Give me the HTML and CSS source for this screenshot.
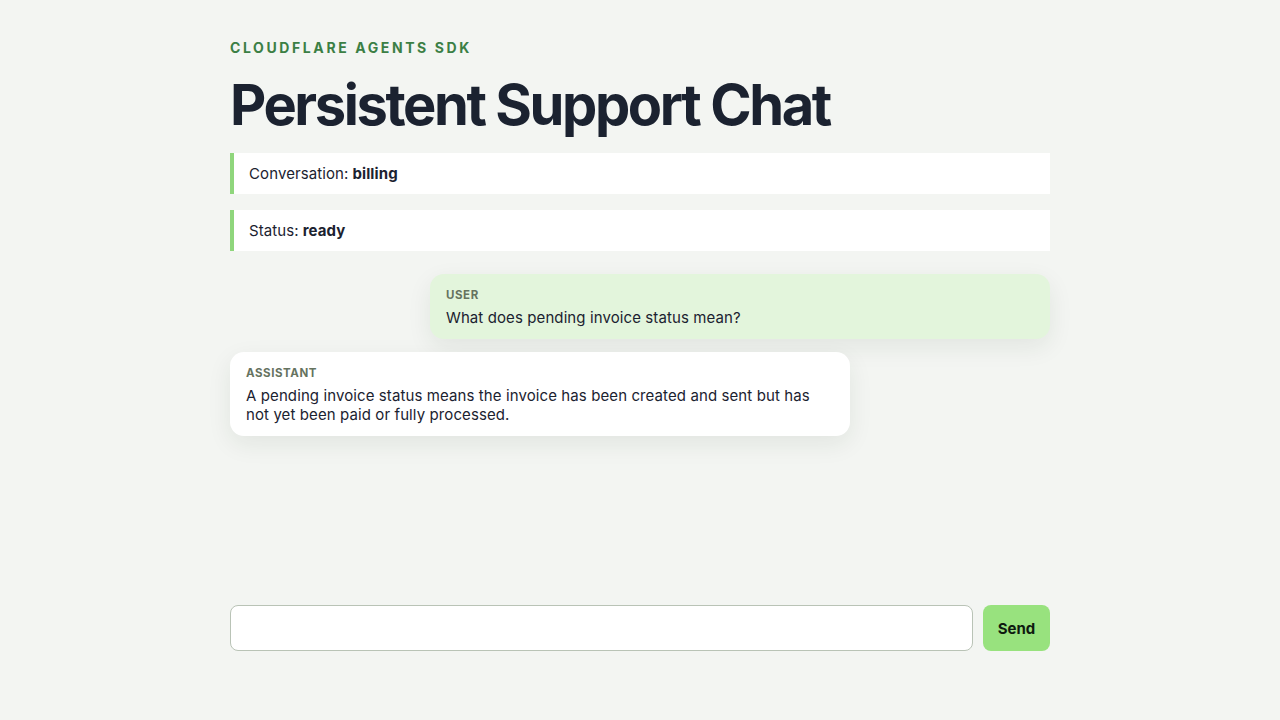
FILE: index.html
```html
<!DOCTYPE html>
<html lang="en">
<head>
<meta charset="utf-8">
<title>Persistent Support Chat</title>
<link rel="stylesheet" href="styles.css">
</head>
<body>
<main class="app">
  <header class="header">
    <p class="eyebrow">Cloudflare Agents SDK</p>
    <h1 class="title">Persistent Support Chat</h1>
  </header>
  <div class="info">Conversation: <strong>billing</strong></div>
  <div class="info">Status: <strong>ready</strong></div>
  <section class="messages">
    <div class="msg msg-user">
      <div class="role">User</div>
      <div class="text">What does pending invoice status mean?</div>
    </div>
    <div class="msg msg-assistant">
      <div class="role">Assistant</div>
      <div class="text">A pending invoice status means the invoice has been created and sent but has not yet been paid or fully processed.</div>
    </div>
  </section>
  <form class="composer">
    <input class="input" type="text" aria-label="Message">
    <button class="send" type="button">Send</button>
  </form>
</main>
</body>
</html>
```

FILE: styles.css
```css
* { box-sizing: border-box; }
html, body { margin: 0; height: 100%; }
body {
  background: #f3f5f2;
  font-family: Inter, "Noto Sans", sans-serif;
  color: #1b2230;
}
.app {
  width: 820px;
  margin: 0 auto;
  height: 100vh;
  padding: 38px 0 69px;
  display: flex;
  flex-direction: column;
}
.eyebrow {
  margin: 0;
  font-size: 14px;
  line-height: 20px;
  font-weight: 700;
  letter-spacing: 2.6px;
  text-transform: uppercase;
  color: #3b7f45;
}
.title {
  margin: 14px 0 15px;
  font-size: 56px;
  line-height: 66px;
  font-weight: 700;
  letter-spacing: -0.043em;
  color: #1b2230;
}
.info {
  background: #fff;
  border-left: 4px solid #8fd67c;
  padding: 0 15px;
  height: 41px;
  display: flex;
  align-items: center;
  font-size: 15px;
  letter-spacing: 0.1px;
  margin-bottom: 16px;
}
.info strong { font-weight: 700; margin-left: 4px; }
.messages {
  flex: 1;
  display: flex;
  flex-direction: column;
  gap: 13px;
  margin-top: 7px;
}
.msg {
  width: 620px;
  padding: 14px 16px 12px;
  border-radius: 14px;
  box-shadow: 0 8px 24px rgba(30, 50, 30, 0.08);
}
.msg-user { align-self: flex-end; background: #e3f5dc; }
.msg-assistant { align-self: flex-start; background: #fff; }
.role {
  font-size: 11.5px;
  line-height: 14px;
  font-weight: 700;
  letter-spacing: 0.05em;
  text-transform: uppercase;
  color: #66735f;
  margin-bottom: 6px;
}
.text { font-size: 15px; line-height: 19px; letter-spacing: 0.1px; }
.composer {
  display: flex;
  gap: 10px;
  margin: 0;
}
.input {
  flex: 1;
  height: 46px;
  border: 1px solid #b9c3b6;
  border-radius: 8px;
  background: #fff;
  font: inherit;
  padding: 0 12px;
}
.send {
  width: 67px;
  height: 46px;
  border: none;
  border-radius: 8px;
  background: #98e27e;
  color: #0f1a10;
  font-family: Inter, sans-serif;
  font-size: 15px;
  font-weight: 700;
}
```
